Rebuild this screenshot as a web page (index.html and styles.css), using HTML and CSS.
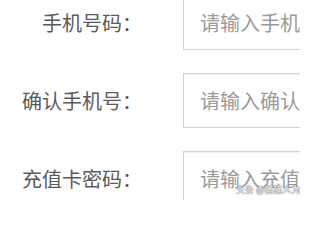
FILE: index.html
```html
<!DOCTYPE html>
<html lang="zh-CN">
<head>
<meta charset="utf-8">
<link rel="stylesheet" href="styles.css">
</head>
<body>
<form class="form">
  <div class="row">
    <label class="label">手机号码：</label>
    <div class="input"><span class="ph">请输入手机号码</span></div>
  </div>
  <div class="row">
    <label class="label">确认手机号：</label>
    <div class="input"><span class="ph">请输入确认手机号</span></div>
  </div>
  <div class="row">
    <label class="label">充值卡密码：</label>
    <div class="input"><span class="ph">请输入充值卡密码</span></div>
  </div>
</form>
<div class="mark">头条 @猫猫人为吃</div>
</body>
</html>
```
FILE: styles.css
```css
html, body {
  margin: 0;
  padding: 0;
  background: #fff;
  overflow: hidden;
}
body {
  width: 300px;
  height: 200px;
  position: relative;
  font-family: "Noto Sans CJK SC", "Noto Sans", sans-serif;
}
.form {
  display: flex;
  flex-direction: column;
  gap: 23px;
  margin-top: -5px;
}
.row {
  display: flex;
  align-items: center;
  gap: 41px;
}
.label {
  width: 142px;
  flex: none;
  text-align: right;
  font-size: 20px;
  line-height: 24px;
  color: #5a5a5a;
  white-space: nowrap;
}
.input {
  flex: 1;
  min-width: 0;
  height: 53px;
  border: 1px solid #d2d2d2;
  border-right: none;
  box-shadow: inset 0 1px 1px rgba(0,0,0,0.06);
  box-sizing: content-box;
  display: flex;
  align-items: center;
  padding-left: 16px;
  overflow: hidden;
}
.ph {
  font-size: 20px;
  line-height: 24px;
  color: #9a9a9a;
  white-space: nowrap;
}
.mark {
  position: absolute;
  left: 236px;
  top: 184px;
  font-size: 9px;
  line-height: 11px;
  color: #fff;
  text-shadow: 0 0 1px #555, 0 0 1px #555;
  white-space: nowrap;
}
```
